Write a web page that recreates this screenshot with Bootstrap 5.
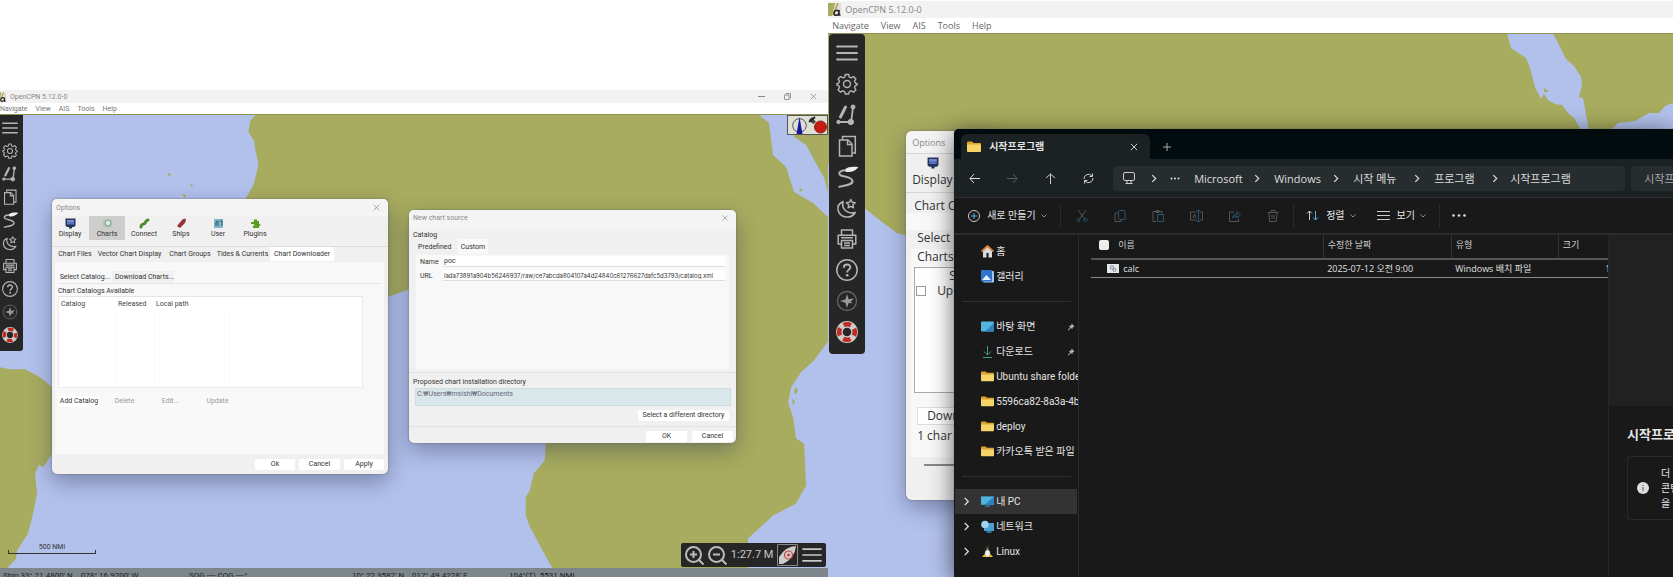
<!DOCTYPE html>
<html lang="ko">
<head>
<meta charset="utf-8">
<meta name="viewport" content="width=device-width, initial-scale=1">
<title>OpenCPN</title>
<link rel="stylesheet" href="https://cdn.jsdelivr.net/npm/bootstrap@5.3.0/dist/css/bootstrap.min.css">
<script src="https://cdn.jsdelivr.net/npm/bootstrap@5.3.0/dist/js/bootstrap.bundle.min.js"></script>
<style>
:root{--land:#a8ac5e;--sea:#b2c1ec;--bar:#262626}
body{font-family:"Open Sans","Noto Sans CJK KR",sans-serif;background:#fff;overflow:hidden}
button,input{font-family:inherit;color:inherit}
button{background:none;border:0;padding:0;white-space:nowrap}
a{color:inherit;text-decoration:none}
svg{display:block;flex:none}
.desk{height:100vh}
.pane-l{flex:0 0 49.5%;padding-top:90px;font:7px/10px Roboto,"Noto Sans CJK KR",sans-serif;color:#333}
.pane-r{font-size:9px;line-height:14px;color:#333}
.app-title{background:#f2f2f2;color:#888}
.pane-l .app-title{height:13px}
.pane-l .app-menu{height:11px;color:#777}
.pane-r .app-title{height:17px;margin-top:1px;font-size:9px}
.pane-r .app-menu{height:15px;color:#666}
.chart{background:var(--sea);overflow:hidden;border-top:1px solid #8d9252}
.chart>.map{position:absolute;inset:0;width:100%;height:100%}
.dock{position:absolute;background:var(--bar);color:#b4b4b4;display:flex;flex-direction:column;align-items:center}
.pane-l .dock{left:0;top:0;width:23px;padding:5px 3px 8px 0;gap:7px;border-radius:0 0 3px 0}
.pane-l .dock svg{width:16px;height:16px}
.pane-r .dock{left:1px;top:0;width:36px;padding:8px 0 11px;gap:9px;border-radius:4px}
.pane-r .dock svg{width:22px;height:22px}
.win{position:absolute;background:#f0f0f0;border-radius:5px;box-shadow:0 0 2px #666,0 8px 22px rgba(40,50,80,.42)}
.win-title{background:#f4f4f4;color:#888;border-radius:5px 5px 0 0}
.opt{left:52px;top:84px;width:336px}
.opt .win-title{height:17px}
.tool{width:36px;height:24px;padding-top:1px}
.tool.on{background:#cdcdcd}
.tool svg{margin:0 auto;width:11px;height:11px}
.tabs{height:16px;border-top:1px solid #dedede}
.tabs button{height:14px}
.sheet{background:#f8f8f8;margin:0 4px 0 3px;padding:9px 3px 0;height:192px}
.sub{height:13px;border-bottom:1px solid #e6e6e6}
.sub button{height:12px;padding:0 3px}
.cats{width:305px;height:92px;background:#fff;border:1px solid #ebebeb;border-top-color:#e4e4e4}
.cats table{width:100%;table-layout:fixed;border-collapse:collapse}
.cats th{font-weight:400;height:13px;padding:0 0 0 2px;color:#444}
.cats td{height:77px;border-right:1px solid #fafafa;padding:0}
.wbtn{background:#fff;height:11px;line-height:11px;text-align:center;color:#333;border-radius:1px}
.ghost{color:#999;background:#f9f9f9}
.src{left:409px;top:95px;width:327px;padding-bottom:1px}
.src .win-title{height:21px}
.src .body{background:#f8f8f8;height:116px;padding:1px 4px 0;border:1px solid #f2f2f2}
.src input{border:0;border-bottom:1px solid #ddd;background:#fff;height:11px;padding:0 1px;flex:1;min-width:0;font-size:7px;outline:0}
.src .long{font-family:Inter,sans-serif;font-size:6px}
.dirbox{background:#d9e7eb;border:1px solid #ccdde2;height:18px;color:#667;resize:none;font:7px/10px Roboto,"Noto Sans CJK KR",sans-serif;display:block;width:100%;padding:0 1px;overflow:hidden}
.compass{position:absolute;right:0;top:0;background:#dfe0d3;border:1px solid #555;height:20px;width:41px}
.zoom{position:absolute;right:2px;bottom:1px;background:var(--bar);height:24px;width:145px;color:#c8c8c8;font-size:11px;border-radius:2px}
.scale{position:absolute;left:8px;bottom:14px;width:88px;height:11px;border-bottom:1px solid #333;text-align:center;color:#333;line-height:8px}
.scale::before,.scale::after{content:"";position:absolute;bottom:0;width:1px;height:3px;background:#333}
.scale::before{left:0}.scale::after{right:0}
.stat{height:9px;background:#7d878b;color:#222;font-size:8px;line-height:10px;padding:3px 0 0 3px;overflow:hidden;display:grid;grid-template-columns:186px 163px 157px 1fr;white-space:nowrap}
.opt2{left:78px;top:97px;width:80px;font-size:12px;line-height:15px;border-radius:6px;overflow:hidden}
.opt2 .win-title{height:23px;font-size:9px;border-bottom:1px solid #d5d5d5}
.opt2 .rule{height:39px;border-bottom:1px solid #d5d5d5}
.opt2 .list{height:126px;background:#fff;border:1px solid #aaa;margin-left:8px}
.opt2 input{width:10px;height:10px;appearance:none;border:1px solid #999;background:#fff}
.exp{position:absolute;left:126px;right:0;top:95px;bottom:0;background:#191919;color:#e4e4e4;font:11px/15px "Open Sans","Noto Sans CJK KR",sans-serif;box-shadow:0 0 1px #666,0 4px 24px rgba(0,0,0,.6);border-top-left-radius:5px;overflow:hidden}
.strip{background:#020c0f;height:30px;padding:5px 0 0 7px}
.xtab{background:#1c2224;width:189px;height:25px;border-radius:6px 6px 0 0;padding:0 12px 0 6px;font-size:10px;font-weight:600}
.navrow{background:#1c2224;height:38px;color:#ddd}
.addr{background:#272c2f;height:25px;border-radius:4px;width:512px;padding:0 10px}
.find{background:#272c2f;height:25px;border:0;border-radius:4px 0 0 4px;flex:1 1 0;min-width:0;padding:0 0 0 13px}
.find::placeholder{color:#aaa;opacity:1}
.cmd{height:38px;border-top:1px solid #303030;border-bottom:2px solid #2b2b2b;font-size:10px}
.cmd .dim{color:#4d4d4d}
.cmd .bar{width:1px;height:24px;background:#292929}
.side{flex:0 0 125px;padding-top:4px;border-right:1px solid #2b2b2b;font:10px/15px Roboto,"Noto Sans CJK KR",sans-serif;overflow:hidden}
.side a{display:flex;align-items:center;height:25px;padding-left:9px;white-space:nowrap}
.side a.sel{background:#333;margin:0 1px;padding-left:8px}
.side .ic{width:13px;height:13px;margin-right:2px}
.side .chev{width:7px;height:9px;margin-right:11px}
.side .none{visibility:hidden}
.side hr{margin:12px 7px 12px 8px;border-color:#777;opacity:.25;border-top-width:1px}
.files{width:100%;table-layout:fixed;border-collapse:collapse;font-size:9px;line-height:15px;color:#d0d0d0}
.files th{font-weight:400;height:24px;padding:0 0 4px 4px;border-right:1px solid #333;border-bottom:2px solid #555;background-clip:padding-box}
.files th:last-child{border-right:0}
.files td{height:18px;padding:0 0 0 4px;border-bottom:1px solid #8a8a8a;white-space:nowrap;overflow:hidden;color:#e0e0e0}
.files input{appearance:none;width:10px;height:10px;border-radius:2px;background:#eee;margin:0}
.prev{flex:0 0 65px;border-left:1px solid #262626}
.prev .top{background:#212121;height:171px}
.prev .tip{border:1px solid #2a2a2a;border-right:0;border-radius:4px 0 0 4px;height:64px;margin:13px 0 0 18px;padding-left:9px}
</style>
</head>
<body>
<svg width="0" height="0" class="position-absolute" aria-hidden="true">
<defs>
<symbol id="i-menu" viewBox="0 0 22 22"><path d="M1 4.500h20M1 11h20M1 17.500h20" stroke="currentColor" stroke-width="1.800" stroke-linecap="round"/></symbol>
<symbol id="i-gear" viewBox="0 0 22 22" ><g fill="none" stroke="currentColor" stroke-width="1.400" stroke-linejoin="round"><circle cx="11" cy="11" r="3.500"/><path d="M9.300 1.500h3.400l.6 2.600 1.900.8 2.300-1.400 2.400 2.400-1.400 2.300.8 1.900 1.700.4v1.500l-1.700.6-.8 1.900 1.400 2.300-2.400 2.400-2.300-1.400-1.900.8-.6 2.400H9.300l-.6-2.400-1.900-.8-2.300 1.400-2.400-2.400 1.400-2.300-.8-1.900-1.700-.6v-1.500l1.700-.4.8-1.900-1.400-2.300 2.400-2.400 2.300 1.400 1.900-.8z"/></g></symbol>
<symbol id="i-route" viewBox="0 0 22 22"><g stroke="currentColor" fill="currentColor"><path d="M9.500 3 4.500 13" stroke-width="3" stroke-linecap="round"/><path d="M17 3.500 15 19M2 18h13" stroke-width="1.800" fill="none"/><circle cx="17" cy="3" r="2"/><circle cx="2.500" cy="18" r="1.700"/><circle cx="14.800" cy="18" r="2.700"/></g></symbol>
<symbol id="i-copy" viewBox="0 0 22 22"><g fill="none" stroke="currentColor" stroke-width="1.500"><path d="M3.500 5H12l4 4v12H3.500z"/><path d="M11.500 5v4.500H16" /><path d="M6.500 4.500V1.500h12.800V18H16.500" /></g></symbol>
<symbol id="i-track" viewBox="0 0 22 22"><path d="M13 4.500C4 3 1 7.500 5 9.500c4 1.500 11 1.500 11.500 5.500.3 3.500-6 4.500-14 6" fill="none" stroke="currentColor" stroke-width="2"/><path d="M9.500 3C12 .8 17 0 22.500 1.200 19.500 5 14.500 6.800 9.700 5.800z" fill="#eee"/></symbol>
<symbol id="i-moon" viewBox="0 0 22 22"><g fill="none" stroke="currentColor" stroke-width="1.600" stroke-linejoin="round"><path d="M7 4.500C-1 8 1 19 10 20c4 .4 7.500-1.500 9.200-4.500C12 17.500 5 12.500 7 4.500z"/><path stroke-width="1.400" d="m14.800 2.500 1.300 2.800 3.100.4-2.300 2.100.6 3-2.700-1.500-2.700 1.500.6-3-2.300-2.100 3.100-.4z"/></g></symbol>
<symbol id="i-print" viewBox="0 0 22 22"><g fill="none" stroke="currentColor" stroke-width="1.500" stroke-linejoin="round"><path d="M5.500 7V2h11v5M5.500 16H2.200V7.200h17.600V16h-3.300"/><path d="M5.500 12.500h11V20h-11zM8 15h6M8 17.500h6M5 9.800h12"/></g></symbol>
<symbol id="i-help" viewBox="0 0 22 22"><g fill="none" stroke="currentColor"><circle cx="11" cy="11" r="10.200" stroke-width="1.500"/><path d="M7.800 8.700c0-4.300 6.700-4.100 6.500-.3-.1 2.200-3.100 2.400-3.100 5" stroke-width="1.900"/></g><circle cx="11.200" cy="16.200" r="1.300" fill="currentColor"/></symbol>
<symbol id="i-star" viewBox="0 0 22 22"><circle cx="11" cy="11" r="9.500" fill="none" stroke="#666" stroke-width="1.300"/><path d="m11 4 1.600 5.200L18 8.500l-3.500 3.200 2.500 1.600-4.400-.4L11 18l-1.600-5.200L4 11l5.400-1.600z" fill="#999"/></symbol>
<symbol id="i-mob" viewBox="0 0 22 22"><circle cx="11" cy="11" r="7.600" fill="none" stroke="#ccc" stroke-width="6.600"/><circle cx="11" cy="11" r="7.800" fill="none" stroke="#c22a20" stroke-width="4.600" stroke-dasharray="7.500 4.750" stroke-dashoffset="3.700"/></symbol>
<symbol id="i-screen" viewBox="0 0 22 22"><path d="M1 1h20v14l-3 3h-4v3H8v-3H4l-3-3z" fill="#26345c"/><path d="M4 4h14v9H4z" fill="#5a74c8"/><path d="M4 4h14v3H4z" fill="#8496d8"/></symbol>
<symbol id="i-folder" viewBox="0 0 14 12"><path d="M0 1.500Q0 .5 1 .5h4l1.500 1.500H13q1 0 1 1V4H0z" fill="#dfa32d"/><path d="M0 3.500h13q1 0 1 1V10q0 1-1 1H1q-1 0-1-1z" fill="#f6d468"/></symbol>
<symbol id="i-x" viewBox="0 0 10 10"><path d="m1 1 8 8M9 1 1 9" stroke="currentColor" fill="none" stroke-width="1.100"/></symbol>
<symbol id="i-chev" viewBox="0 0 7 10"><path d="m1.500 1 4 4-4 4" stroke="currentColor" fill="none" stroke-width="1.400"/></symbol>
<symbol id="i-down" viewBox="0 0 8 6"><path d="m1.500 1.500 2.500 2.500 2.500-2.500" stroke="#888" fill="none"/></symbol>
<symbol id="i-logo" viewBox="0 0 13 13"><path d="M0 0h13v13H0z" fill="#ddd"/><path d="M0 0h7L4 13H0z" fill="#a8ac5e"/><path d="m10 0-5 12" stroke="#bd9f36" stroke-width="1.500"/><path d="M6 10.500c0-4 5-4 5-1s-5 4-5 1M11 7v5h1.500" stroke="#222" fill="none" stroke-width="1.500"/></symbol>
<symbol id="i-pin" viewBox="0 0 12 12"><path d="m7 .8 4.300 4.300-1.700.8-1.300 1.300-.3 2.300-2-2L2 11.300l-1-.7 3.700-4-2-2 2.500-.4L6.500 3z" fill="#a7b0b8"/></symbol>
<symbol id="i-pc" viewBox="0 0 14 12"><path d="M0 .5h14v9H0z" fill="#53b2df"/><path d="M14 .5v9H4z" fill="#2c83bd"/><path d="M5 9.500h4l1 2.500H4z" fill="#276b99"/></symbol>
</defs>
</svg>

<div class="desk d-flex overflow-hidden">
<section class="pane-l d-flex flex-column position-relative overflow-hidden">
  <header class="app-title d-flex align-items-center">
    <svg width="6" height="10" viewBox="5 0 8 13"><use href="#i-logo" width="13" height="13"/></svg><span class="ms-1">OpenCPN 5.12.0-0</span>
    <div class="ms-auto d-flex align-items-center me-2" style="gap:19px;padding-right:3px">
      <button aria-label="최소화"><svg width="7" height="7" viewBox="0 0 7 7"><path d="M0 3.500h7" stroke="#888"/></svg></button>
      <button aria-label="복원"><svg width="7" height="7" viewBox="0 0 7 7" fill="none" stroke="#999"><path d="M.5 2h4.500v4.500H.5zM2 2V.5h4.500V5H5"/></svg></button>
      <button aria-label="닫기"><svg width="7" height="7"><use href="#i-x"/></svg></button>
    </div>
  </header>
  <nav class="app-menu d-flex align-items-center"><a href="#">Navigate</a><a href="#" class="ms-2">View</a><a href="#" class="ms-2">AIS</a><a href="#" class="ms-2">Tools</a><a href="#" class="ms-2">Help</a></nav>

  <main class="chart position-relative flex-grow-1">
    <svg class="map" viewBox="0 115 827 453" preserveAspectRatio="xMinYMin slice" fill="#a8ac5e">
      <path d="M255 115 250 121 248 132 254 141 255 150 258 163 257 170 253 185 245 199 260 260 300 300 370 300 389 296 409 289 440 290 500 340 545 443 544 460 533 473 529 490 525 497 525 515 529 526 536 539 543 552 552 568H747V538L772 515 795 503 805 485 803 443 795 438 792 417 787 402 790 387 800 372 813 360 827 341V217L812 203 793 192 785 167 772 155 768 123 758 115z"/>
      <path d="M788 115 793 137 805 145 812 158 823 178 827 193V115z"/>
      <path d="M0 367 10 369 25 369 40 377 52 387 80 420 51 455 43 467 39 464 35 473 37 493 33 513 28 533 17 550 16 558 7 568H0z"/>
      <path d="m167 173 4 1-2 3zm23 11 3 1-2 2zm-8 9 4 3-2 2z"/>
      <path d="m794 387 3 2-2 5-2-2zm-3 11 3 3-2 4zm7-210 4 2-3 2z"/>
    </svg>

    <nav class="dock" aria-label="도구">
      <svg><use href="#i-menu"/></svg><svg><use href="#i-gear"/></svg><svg><use href="#i-route"/></svg><svg><use href="#i-copy"/></svg><svg><use href="#i-track"/></svg><svg><use href="#i-moon"/></svg><svg><use href="#i-print"/></svg><svg><use href="#i-help"/></svg><svg><use href="#i-star"/></svg><svg><use href="#i-mob"/></svg>
    </nav>

    <div class="compass d-flex align-items-center justify-content-between ps-1">
      <svg width="15" height="17" viewBox="0 0 15 17"><circle cx="7.500" cy="8.500" r="6.800" fill="#ddd" stroke="#555"/><path d="m7.500 0 3 17h-6z" fill="#1717a0"/></svg>
      <svg width="19" height="18" viewBox="0 0 19 18"><path d="m1 4 3-3 4 5-3 2z" fill="#444"/><path d="m1 6 6-5" stroke="#222" stroke-width="2"/><circle cx="12.500" cy="11" r="6" fill="#c71b12" stroke="#822"/></svg>
    </div>

    <section class="win opt">
      <div class="win-title d-flex align-items-center justify-content-between px-1"><span>Options</span><button aria-label="닫기" class="pe-1"><svg width="7" height="7"><use href="#i-x"/></svg></button></div>
      <div class="d-flex" style="gap:1px;height:30px">
        <button class="tool"><svg><use href="#i-screen"/></svg>Display</button>
        <button class="tool on"><svg viewBox="0 0 11 11"><path d="m1 2 4-1 5 1v7l-5 1-4-1z" fill="#b4c8b8"/><circle cx="6" cy="5" r="3" fill="#dde8e0" stroke="#7a9c8a"/></svg>Charts</button>
        <button class="tool"><svg viewBox="0 0 11 11"><path d="M2 9c0-4 3-2 4-4s2-3 3-3" stroke="#4f8a30" stroke-width="3" fill="none" stroke-linecap="round"/></svg>Connect</button>
        <button class="tool"><svg viewBox="0 0 11 11"><path d="M1 8 6 2q2-2 4-1 0 3-2 5L4 10z" fill="#96303a"/></svg>Ships</button>
        <button class="tool"><svg viewBox="0 0 11 11"><path d="M1 1h9v9H1z" fill="#7fb5c4"/><path d="M3 8V4l2-1v5M7 3h2v5" stroke="#28607a" fill="none"/></svg>User</button>
        <button class="tool"><svg viewBox="0 0 11 11"><path d="M1 4h3C2 1 8 0 7 3h2v3c2 0 2 2 0 2v2H3V8l2-1-2-1-2 0z" fill="#5c9a22"/></svg>Plugins</button>
      </div>
      <div class="tabs d-flex ps-1"><button style="width:38px">Chart Files</button><button style="width:71px">Vector Chart Display</button><button style="width:50px">Chart Groups</button><button style="width:55px">Tides &amp; Currents</button><button class="bg-white" style="width:64px">Chart Downloader</button></div>
      <div class="sheet">
        <div class="sub d-flex"><button style="width:54px" class="px-0">Select Catalog...</button><button style="background:#f0f0f0;width:62px">Download Charts...</button></div>
        <div style="height:12px;line-height:14px">Chart Catalogs Available</div>
        <div class="cats"><table><colgroup><col style="width:57px"><col style="width:38px"><col style="width:75px"><col></colgroup><thead><tr><th>Catalog</th><th>Released</th><th>Local path</th><th></th></tr></thead><tbody><tr><td></td><td></td><td></td><td class="border-0"></td></tr></tbody></table></div>
        <div class="d-flex pt-1 mt-1" style="gap:5px;margin-left:1px"><button class="wbtn" style="width:40px">Add Catalog</button><button class="wbtn ghost" style="width:41px">Delete</button><button class="wbtn ghost" style="width:41px">Edit...</button><button class="wbtn ghost" style="width:43px">Update</button></div>
      </div>
      <footer class="d-flex justify-content-end align-items-center gap-1 px-1" style="height:20px"><button class="wbtn" style="width:40px">Ok</button><button class="wbtn" style="width:41px">Cancel</button><button class="wbtn" style="width:40px">Apply</button></footer>
    </section>

    <section class="win src">
      <div class="win-title d-flex align-items-center justify-content-between px-1" style="padding-bottom:5px"><span>New chart source</span><button aria-label="닫기" class="pe-1"><svg width="6" height="6"><use href="#i-x"/></svg></button></div>
      <div class="px-1" style="line-height:8px">Catalog</div>
      <div class="d-flex" style="padding-left:9px;height:15px"><button style="width:40px;text-align:left">Predefined</button><button style="width:30px;background:#f8f8f8">Custom</button></div>
      <div style="padding:0 6px">
        <div class="body">
          <div class="d-flex align-items-center"><label for="n" style="width:23px">Name</label><input id="n" value="poc"></div>
          <div class="d-flex align-items-center" style="margin-top:3px"><label for="u" style="width:23px">URL</label><input id="u" class="long" value="lada73891a904b56246937/raw/ce7abcda804107a4d24840c61276627dafc5d3793/catalog.xml"></div>
        </div>
      </div>
      <label for="d" class="d-block px-1 border-top" style="margin-top:2px;padding-top:4px;height:16px">Proposed chart installation directory</label>
      <div style="padding:0 5px 0 6px"><textarea id="d" class="dirbox" readonly>C:₩Users₩msishi₩Documents</textarea></div>
      <div class="d-flex justify-content-end border-bottom" style="padding:4px 7px 5px"><button class="wbtn" style="width:91px">Select a different directory</button></div>
      <div class="d-flex justify-content-end" style="gap:5px;padding:4px 3px 0"><button class="wbtn" style="width:41px">OK</button><button class="wbtn" style="width:41px">Cancel</button></div>
    </section>

    <div class="scale">500 NMi</div>
    <div class="zoom d-flex align-items-center justify-content-between px-1">
      <svg width="19" height="19" viewBox="0 0 19 19" fill="none" stroke="#bbb" stroke-width="2"><circle cx="8.500" cy="8.500" r="7.500"/><path d="m14 14 4.500 4.500M5 8.500h7M8.500 5v7"/></svg>
      <svg width="19" height="19" viewBox="0 0 19 19" fill="none" stroke="#bbb" stroke-width="2"><circle cx="8.500" cy="8.500" r="7.500"/><path d="m14 14 4.500 4.500M5 8.500h7"/></svg>
      <span>1:27.7 M</span>
      <svg width="21" height="22" viewBox="0 0 21 22"><path d="M.5.500h20v21H.5z" fill="none" stroke="#888"/><path d="M19 2Q9 2 2 13v7h4Q18 14 19 2" fill="#ccc"/><circle cx="11.500" cy="11" r="4" fill="none" stroke="#c44" stroke-width="1.200"/><circle cx="11.500" cy="11" r="1.300" fill="#c22"/></svg>
      <svg width="20" height="20"><use href="#i-menu"/></svg>
    </div>
  </main>
  <footer class="stat"><span>Ship 33° 21.4800' N &nbsp; &nbsp;078° 16.9200' W</span><span>SOG ---- COG ----°</span><span>10° 22.3582' N &nbsp; &nbsp;017° 49.4228' E</span><span>104°(T) &nbsp;5531 NMi</span></footer>
</section>

<section class="pane-r d-flex flex-column flex-grow-1 position-relative overflow-hidden">
  <header class="app-title d-flex align-items-center"><svg width="13" height="13"><use href="#i-logo"/></svg><span class="ms-1">OpenCPN 5.12.0-0</span></header>
  <nav class="app-menu d-flex align-items-center ps-1 gap-2"><a href="#" class="me-1">Navigate</a><a href="#" class="me-1">View</a><a href="#" class="me-1">AIS</a><a href="#" class="me-1">Tools</a><a href="#">Help</a></nav>
  <main class="chart position-relative flex-grow-1">
    <svg class="map" viewBox="828 34 845 543" preserveAspectRatio="xMinYMin slice" fill="#b2c1ec">
      <path d="M828 34h845v543H828z" fill="#a8ac5e"/>
      <path d="M828 163 863 207 882 222 897 233 960 250V577H828z"/>
      <path d="M1507 33 1511 48 1526 58 1530 68 1535 87 1541 99 1544 94 1548 100 1555 104 1562 105 1568 113 1574 118 1581 130H1589L1583 98 1579 97 1582 85 1581 77 1574 66 1566 59 1553 33z"/>
      <path d="m1544 88 5 4h-5z" fill="#a8ac5e"/>
      <path d="M1612 129 1618 123 1635 121 1649 113 1659 113 1665 106 1673 103V140H1612z"/>
    </svg>
    <nav class="dock" aria-label="도구">
      <svg><use href="#i-menu"/></svg><svg><use href="#i-gear"/></svg><svg><use href="#i-route"/></svg><svg><use href="#i-copy"/></svg><svg><use href="#i-track"/></svg><svg><use href="#i-moon"/></svg><svg><use href="#i-print"/></svg><svg><use href="#i-help"/></svg><svg><use href="#i-star"/></svg><svg><use href="#i-mob"/></svg>
    </nav>

    <section class="win opt2">
      <div class="win-title d-flex align-items-center" style="padding-left:6px">Options</div>
      <div class="rule" style="padding:3px 0 0 6px"><svg width="14" height="12" style="margin-left:14px"><use href="#i-screen"/></svg><div style="padding-top:3px">Display</div></div>
      <div style="padding:5px 0 0 8px;height:37px;background:linear-gradient(#f0f0f0 20px,#f8f8f8 20px)">Chart C</div>
      <div style="background:#f8f8f8;margin-left:5px">
        <div style="padding-left:6px;height:19px;background:#f0f0f0">Select</div>
        <div style="padding-left:6px;height:18px">Charts</div>
        <div class="list" style="margin-left:3px"><div style="padding-left:34px;height:15px">S</div><div class="d-flex align-items-center" style="padding-left:1px;gap:11px"><input type="checkbox" aria-label="Up">Up</div></div>
        <div style="padding:14px 0 0 6px"><button class="bg-white" style="padding-left:9px;height:18px;line-height:16px;border:1px solid #ddd;width:80px;text-align:left">Down</button></div>
        <div style="padding:3px 0 0 6px;height:32px">1 char</div>
        <div style="height:15px;background:#f0f0f0;padding:7px 0 0 13px"><div style="height:2px;background:#888"></div></div>
      </div>
      <div style="height:28px"></div>
    </section>

    <section class="exp d-flex flex-column">
      <div class="strip d-flex">
        <div class="xtab d-flex align-items-center"><svg width="14" height="12"><use href="#i-folder"/></svg><span class="ms-2">시작프로그램</span><button class="ms-auto" aria-label="탭 닫기"><svg width="8" height="8"><use href="#i-x"/></svg></button></div>
        <button class="ms-2 ps-1" aria-label="새 탭"><svg width="10" height="10" viewBox="0 0 10 10"><path d="M1 5h8M5 1v8" stroke="#aaa"/></svg></button>
      </div>
      <div class="navrow d-flex align-items-center">
        <div class="d-flex align-items-center" style="width:159px;padding-left:15px;gap:27px">
          <button aria-label="뒤로"><svg width="11" height="11" viewBox="0 0 11 11" fill="none" stroke="#ddd"><path d="M5 1 1 5.500 5 10M1 5.500h10"/></svg></button>
          <button aria-label="앞으로"><svg width="11" height="11" viewBox="0 0 11 11" fill="none" stroke="#555c60"><path d="m6 1 4 4.500L6 10M10 5.500H0"/></svg></button>
          <button aria-label="위로"><svg width="11" height="11" viewBox="0 0 11 11" fill="none" stroke="#ccc"><path d="m1 5 4.500-4L10 5M5.500 1v10"/></svg></button>
          <button aria-label="새로 고침"><svg width="11" height="11" viewBox="0 0 11 11" fill="none" stroke="#ccc"><path d="M1 6A4.500 4.500 0 0 1 9 3M9.500.500V3.500h-3M10 5A4.500 4.500 0 0 1 2 8M1.500 10.500v-3h3"/></svg></button>
        </div>
        <nav class="addr d-flex align-items-center">
          <svg width="12" height="12" viewBox="0 0 12 12" fill="none" stroke="#ccc"><rect x=".5" y=".5" width="11" height="8" rx="1.500"/><path d="M2.500 11.500h7M4 9v2M8 9v2"/></svg>
          <svg width="6" height="9" style="margin-left:16px"><use href="#i-chev"/></svg>
          <button style="margin-left:13px;width:14px" aria-label="더 보기"><svg width="10" height="3" viewBox="0 0 10 3" fill="#ddd"><circle cx="1.500" cy="1.500" r="1"/><circle cx="5" cy="1.500" r="1"/><circle cx="8.500" cy="1.500" r="1"/></svg></button>
          <a href="#" style="margin-left:10px;width:60px">Microsoft</a><svg width="6" height="9"><use href="#i-chev"/></svg>
          <a href="#" style="margin-left:14px;width:59px">Windows</a><svg width="6" height="9"><use href="#i-chev"/></svg>
          <a href="#" style="margin-left:14px;width:61px">시작 메뉴</a><svg width="6" height="9"><use href="#i-chev"/></svg>
          <a href="#" style="margin-left:14px;width:58px">프로그램</a><svg width="6" height="9"><use href="#i-chev"/></svg>
          <a href="#" style="margin-left:12px">시작프로그램</a>
        </nav>
        <input class="find" style="margin-left:6px" type="text" placeholder="시작프로그램 검색" aria-label="검색">
      </div>
      <div class="cmd d-flex align-items-center">
        <button class="d-flex align-items-center" style="width:106px;padding-left:14px"><svg width="12" height="12" viewBox="0 0 12 12" fill="none"><circle cx="6" cy="6" r="5.500" stroke="#ccc"/><path d="M3 6h6M6 3v6" stroke="#5ab0e8"/></svg><span style="margin-left:7px">새로 만들기</span><svg class="ms-1" width="8" height="6"><use href="#i-down"/></svg></button>
        <span class="bar"></span>
        <div class="dim d-flex align-items-center" style="padding:0 14px 0 15px;gap:26px">
          <button aria-label="잘라내기"><svg width="12" height="12" viewBox="0 0 12 12" fill="none" stroke="#555"><path d="m2 0 6.500 9M10 0 3.500 9"/><circle cx="2.500" cy="10" r="1.500" stroke="#2b5570"/><circle cx="9.500" cy="10" r="1.500" stroke="#2b5570"/></svg></button>
          <button aria-label="복사"><svg width="12" height="12" viewBox="0 0 12 12" fill="none" stroke="#555"><path d="M3.500 3H1v8.500h6V10"/><rect x="4.500" y=".5" width="6.500" height="9" rx="1" stroke="#2b5570"/></svg></button>
          <button aria-label="붙여넣기"><svg width="12" height="12" viewBox="0 0 12 12" fill="none" stroke="#555"><path d="M4 11.500H1V1.500h9V4M4 .5h3v2H4z"/><path d="M5.500 4.500h6v7h-6z" stroke="#2b5570"/></svg></button>
          <button aria-label="이름 바꾸기"><svg width="13" height="12" viewBox="0 0 13 12" fill="none" stroke="#555"><path d="M7 2H.5v8H7M10 2h2.500v8H10M3 8l1.500-4L6 8"/><path d="M8.500 0v12M7 .5h3M7 11.500h3" stroke="#2b5570"/></svg></button>
          <button aria-label="공유"><svg width="12" height="12" viewBox="0 0 12 12" fill="none" stroke="#555"><path d="M5 2H.5v9.500h9V9"/><path d="M3.500 8Q4 4 8 4V1.500L11.500 5 8 8V6Q5 6 3.500 8z" stroke="#2b5570"/></svg></button>
          <button aria-label="삭제"><svg width="12" height="12" viewBox="0 0 12 12" fill="none" stroke="#555"><path d="M.5 2.500h11M2 2.500l.6 9h6.800l.6-9M4 2.500v-2h4v2M5 5v4M7 5v4"/></svg></button>
        </div>
        <span class="bar"></span>
        <button class="d-flex align-items-center" style="margin-left:12px"><svg width="13" height="11" viewBox="0 0 13 11" fill="none"><path d="M3.500 10V1M1 3.500 3.500 1 6 3.500" stroke="#ccc"/><path d="M9.500 1v9M7 7.500 9.500 10 12 7.500" stroke="#5ab0e8"/></svg><span style="margin-left:7px">정렬</span><svg class="ms-1" width="8" height="6"><use href="#i-down"/></svg></button>
        <button class="d-flex align-items-center" style="margin:0 12px 0 20px"><svg width="13" height="9" viewBox="0 0 13 9"><path d="M0 .5h13M0 4.500h13M0 8.500h13" stroke="#ccc"/></svg><span style="margin-left:7px">보기</span><svg class="ms-1" width="8" height="6"><use href="#i-down"/></svg></button>
        <span class="bar"></span>
        <button style="margin-left:12px" aria-label="자세히"><svg width="14" height="3" viewBox="0 0 14 3" fill="#ddd"><circle cx="1.500" cy="1.500" r="1.300"/><circle cx="7" cy="1.500" r="1.300"/><circle cx="12.500" cy="1.500" r="1.300"/></svg></button>
      </div>
      <div class="d-flex flex-grow-1" style="min-height:0">
        <nav class="side">
          <a href="#"><svg class="chev none"></svg><svg class="ic" viewBox="0 0 13 13"><path d="M2 5.500v7h3.500V8h2v4.500H11v-7L6.500 1.500z" fill="#d8dadd"/><path d="M.5 6.500 6.500 1l6 5.500" stroke="#dd7f3c" stroke-width="1.800" fill="none"/></svg>홈</a>
          <a href="#"><svg class="chev none"></svg><svg class="ic" viewBox="0 0 13 13"><rect x="2" y="1" width="11" height="11.500" rx="1" fill="#9dc8f2"/><rect width="11" height="11.500" rx="1" fill="#2f74c8"/><path d="m1 10 4.500-5L10 10z" fill="#e5f1ff"/></svg>갤러리</a>
          <hr>
          <a href="#"><svg class="chev none"></svg><svg class="ic" viewBox="0 0 13 13"><rect y="1.500" width="13" height="10" rx="1" fill="#54b3df"/><path d="M13 3v8.500H4z" fill="#2d86be"/></svg>바탕 화면<svg class="ms-auto" style="margin-right:3px" width="8" height="8"><use href="#i-pin"/></svg></a>
          <a href="#"><svg class="chev none"></svg><svg class="ic" viewBox="0 0 13 13" fill="none" stroke="#3f9d7f"><path d="M6.500 1v9M3 6.500l3.500 3.500L10 6.500M2 12.500h9"/></svg>다운로드<svg class="ms-auto" style="margin-right:3px" width="8" height="8"><use href="#i-pin"/></svg></a>
          <a href="#"><svg class="chev none"></svg><svg class="ic"><use href="#i-folder"/></svg>Ubuntu share folder</a>
          <a href="#"><svg class="chev none"></svg><svg class="ic"><use href="#i-folder"/></svg>5596ca82-8a3a-4ba</a>
          <a href="#"><svg class="chev none"></svg><svg class="ic"><use href="#i-folder"/></svg>deploy</a>
          <a href="#"><svg class="chev none"></svg><svg class="ic"><use href="#i-folder"/></svg>카카오톡 받은 파일</a>
          <hr>
          <a href="#" class="sel"><svg class="chev"><use href="#i-chev"/></svg><svg class="ic"><use href="#i-pc"/></svg>내 PC</a>
          <a href="#"><svg class="chev"><use href="#i-chev"/></svg><svg class="ic" viewBox="0 0 13 13"><path d="M3 3h10v8H3z" fill="#4b9fd2"/><circle cx="4" cy="4.500" r="3.800" fill="#9ed4f0"/><path d="M6 11h4l1 2H5z" fill="#2a6f9d"/></svg>네트워크</a>
          <a href="#"><svg class="chev"><use href="#i-chev"/></svg><svg class="ic" viewBox="0 0 13 13"><path d="M6.500.5C4 .5 5 4 4 6s-2 5 0 6h5c2-1 1-4 0-6s0-5.500-2.500-5.500" fill="#333"/><ellipse cx="6.500" cy="8.500" rx="2.500" ry="3.500" fill="#eee"/><path d="m5.500 3.500 1 1.500 1-1.500zM1 12l2.500-3 2 3zm11 0L9.500 9l-2 3z" fill="#f1bb24"/></svg>Linux</a>
        </nav>
        <div class="flex-grow-1 overflow-hidden" style="padding-left:12px;min-width:0">
          <table class="files">
            <colgroup><col style="width:232px"><col style="width:128px"><col style="width:107px"><col></colgroup>
            <thead><tr><th><div class="d-flex align-items-center" style="gap:9px;padding-left:4px"><input type="checkbox" aria-label="모두 선택">이름</div></th><th>수정한 날짜</th><th>유형</th><th>크기</th></tr></thead>
            <tbody><tr><td><div class="d-flex align-items-center" style="padding-left:12px;gap:4px"><svg width="12" height="9" viewBox="0 0 12 9"><path d="M0 0h12v9H0z" fill="#e8e8e8"/><circle cx="5" cy="3.500" r="1.700" fill="none" stroke="#789"/><circle cx="7.500" cy="6" r="1.500" fill="none" stroke="#789"/></svg>calc</div></td><td>2025-07-12 오전 9:00</td><td>Windows 배치 파일</td><td style="padding-left:47px">1KB</td></tr></tbody>
          </table>
        </div>
        <aside class="prev overflow-hidden">
          <div class="top"></div>
          <div class="fw-bold text-nowrap" style="font-size:13px;line-height:18px;padding:19px 0 0 18px">시작프로그램</div>
          <div class="tip d-flex align-items-center"><svg width="12" height="12" viewBox="0 0 12 12"><circle cx="6" cy="6" r="6" fill="#ddd"/><path d="M6 5v4M6 3v1" stroke="#555"/></svg><div class="text-nowrap" style="margin-left:12px;font-size:10px">더 많은<br>콘텐츠<br>을</div></div>
        </aside>
      </div>
    </section>
  </main>
</section>
</div>
</body>
</html>
